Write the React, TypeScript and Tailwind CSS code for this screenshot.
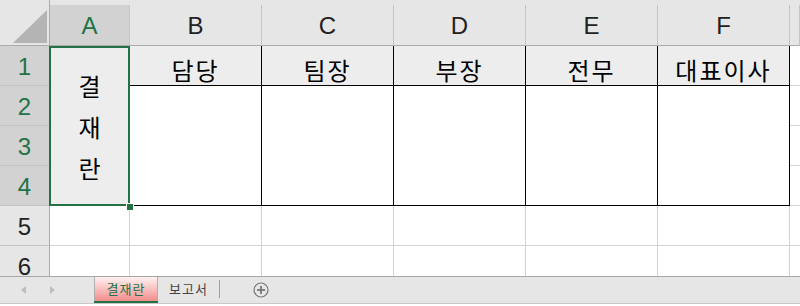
import React from "react";

const FONT = { fontFamily: '"Liberation Sans", "Noto Sans CJK KR", sans-serif' };
const KFONT = { fontFamily: '"Noto Sans CJK KR", "Liberation Sans", sans-serif' };

function ColHeader({ label, selected, col }: { label: string; selected?: boolean; col: string }) {
  return (
    <div className={`${col} row-start-1 bg-[#e6e6e6] pt-[5px] flex`}>
      <div
        className={`flex-1 flex items-center justify-center border-r border-b border-r-[#c4c4c4] border-b-[#ababab] text-[24px] leading-none pt-[1px] ${
          selected ? "bg-[#d2d2d2] text-[#217346]" : "text-[#222]"
        }`}
      >
        {label}
      </div>
    </div>
  );
}

function RowHeader({ n, selected, row }: { n: number; selected?: boolean; row: string }) {
  return (
    <div
      className={`col-start-1 ${row} flex items-center justify-center border-r border-b border-r-[#ababab] border-b-[#c4c4c4] text-[24px] leading-none pt-[3px] ${
        selected ? "bg-[#d2d2d2] text-[#217346]" : "bg-[#e6e6e6] text-[#222]"
      }`}
    >
      {n}
    </div>
  );
}

export default function App() {
  const titles = ["담당", "팀장", "부장", "전무", "대표이사"];
  const cols = ["col-start-3", "col-start-4", "col-start-5", "col-start-6", "col-start-7"];
  const letters = ["B", "C", "D", "E", "F"];
  return (
    <div className="w-[800px] h-[306px] bg-white flex flex-col overflow-hidden" style={FONT}>
      <div className="h-[276px] overflow-hidden">
        <div className="grid grid-cols-[50px_80px_132px_132px_132px_132px_132px_10px] grid-rows-[46px_40px_40px_40px_40px_40px_40px]">
          {/* corner */}
          <div className="col-start-1 row-start-1 bg-[#e6e6e6] border-r border-b border-r-[#ababab] border-b-[#ababab]">
            <svg width="49" height="45" viewBox="0 0 49 45">
              <polygon points="13,43 47,43 47,10" fill="#b4b4b4" />
            </svg>
          </div>
          <ColHeader label="A" selected col="col-start-2" />
          {letters.map((l, i) => (
            <ColHeader key={l} label={l} col={cols[i]} />
          ))}
          <ColHeader label="" col="col-start-8" />

          <RowHeader n={1} selected row="row-start-2" />
          <RowHeader n={2} selected row="row-start-3" />
          <RowHeader n={3} selected row="row-start-4" />
          <RowHeader n={4} selected row="row-start-5" />
          <RowHeader n={5} row="row-start-6" />
          <RowHeader n={6} row="row-start-7" />

          {/* merged A1:A4 */}
          <div className="col-start-2 row-start-2 row-span-4 relative bg-[#ededed] border-r border-b border-[#d4d4d4]">
            <div className="h-full flex flex-col items-center justify-center text-[24px] leading-[41px] text-black pt-[1px]" style={KFONT}>
              <span>결</span>
              <span>재</span>
              <span>란</span>
            </div>
            <div className="absolute z-10 -left-[1px] top-0 -right-[1px] -bottom-[1px] border-2 border-[#217346] pointer-events-none" />
            <div className="absolute z-20 left-[77px] top-[158px] w-[6px] h-[6px] bg-[#217346] outline outline-1 outline-white" />
          </div>

          {/* row 1 titles */}
          {titles.map((t, i) => (
            <div
              key={t}
              className={`${cols[i]} row-start-2 bg-[#ededed] border-r border-b border-black flex items-end justify-center pb-[3px] text-[24px] leading-none text-black tracking-[2px]`}
              style={KFONT}
            >
              {t}
            </div>
          ))}
          {/* merged 2-4 */}
          {cols.map((c) => (
            <div key={c} className={`${c} row-start-3 row-span-3 bg-white border-r border-b border-black`} />
          ))}
          <div className="col-start-8 row-start-2 border-b border-[#d4d4d4]" />
          <div className="col-start-8 row-start-3 border-b border-[#d4d4d4]" />
          <div className="col-start-8 row-start-4 border-b border-[#d4d4d4]" />
          <div className="col-start-8 row-start-5 border-b border-[#d4d4d4]" />

          {/* rows 5,6 */}
          {["row-start-6", "row-start-7"].map((r) => (
            <React.Fragment key={r}>
              <div className={`col-start-2 ${r} border-r border-b border-[#d4d4d4]`} />
              {cols.map((c) => (
                <div key={c} className={`${c} ${r} border-r border-b border-[#d4d4d4]`} />
              ))}
              <div className={`col-start-8 ${r} border-b border-[#d4d4d4]`} />
            </React.Fragment>
          ))}
        </div>
      </div>

      {/* tab bar */}
      <div className="h-[28px] bg-[#e6e6e6] border-t border-b border-t-[#a6a6a6] border-b-[#c8c8c8] flex items-start relative">
        <div className="w-[94px] h-full flex items-center">
          <svg width="94" height="26" viewBox="0 0 94 26">
            <polygon points="26,9 26,17 21,13" fill="#bdbdbd" />
            <polygon points="50,9 50,17 55,13" fill="#bdbdbd" />
          </svg>
        </div>
        <div
          className="w-[64px] h-[24px] border-l border-r border-[#b0b0b0] bg-gradient-to-b from-[#fdf2f2] to-[#f08c8c] flex items-center justify-center text-[13px] text-[#217346] relative"
          style={KFONT}
        >
          <span className="tracking-[1px]">결재란</span>
          <div className="absolute -left-[1px] -right-[1px] -bottom-[2px] h-[2px] bg-[#217346]" />
        </div>
        <div className="w-[61px] h-[24px] flex items-center justify-center text-[13px] text-[#444] tracking-[1px]" style={KFONT}>
          보고서
        </div>
        <div className="w-px h-[18px] bg-[#a0a0a0] mt-[3px]" />
        <div className="ml-[33px] mt-[5px]">
          <svg width="16" height="16" viewBox="0 0 16 16">
            <circle cx="8" cy="8" r="7" fill="none" stroke="#777" strokeWidth="1.2" />
            <line x1="8" y1="4" x2="8" y2="12" stroke="#777" strokeWidth="1.8" />
            <line x1="4" y1="8" x2="12" y2="8" stroke="#777" strokeWidth="1.8" />
          </svg>
        </div>
      </div>
      <div className="flex-1 bg-white" />
    </div>
  );
}
